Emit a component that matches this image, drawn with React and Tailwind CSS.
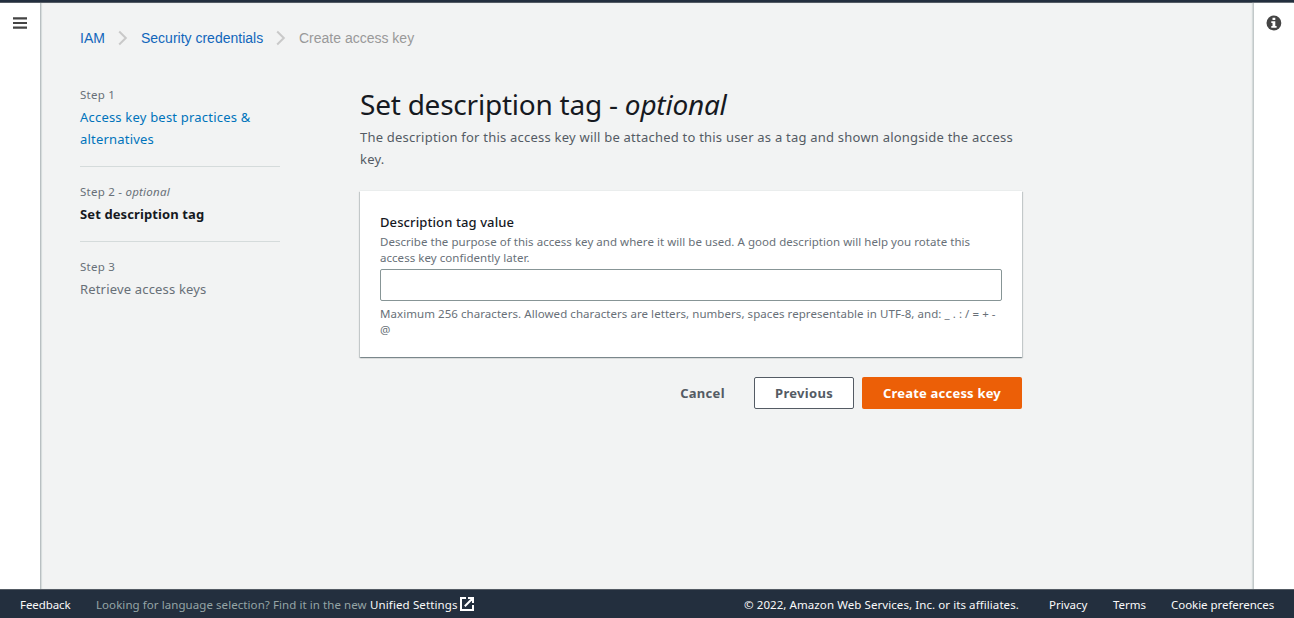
const Line = ({ className = '', children }) => (
  <span className={`block whitespace-nowrap ${className}`}>{children}</span>
);

const Chevron = () => (
  <svg width="10" height="16" viewBox="0 0 10 16" fill="none" stroke="#c9c9c9" strokeWidth="2" className="shrink-0">
    <path d="M1.2 1.5 7.8 8l-6.6 6.5" />
  </svg>
);

function Breadcrumbs() {
  return (
    <nav className="flex h-5 items-center font-['Liberation_Sans',sans-serif] text-[14px] leading-5 whitespace-nowrap text-[#1166bb]">
      <a className="w-[38px]">IAM</a>
      <Chevron />
      <a className="ml-[13px] w-[135px]">Security credentials</a>
      <Chevron />
      <span className="ml-[13px] text-[#999999]">Create access key</span>
    </nav>
  );
}

function Steps() {
  return (
    <ol className="w-[200px] shrink-0 text-[13px] text-[#687078]">
      <li className="h-[83px] border-b border-[#d5dbdb]">
        <Line className="h-[22px] text-[11.5px] leading-[21px] tracking-[0.24px]">Step 1</Line>
        <a className="block text-[#0073bb]">
          <Line className="leading-[22px] tracking-[0.2px]">Access key best practices &amp;</Line>
          <Line className="leading-[22px] tracking-[0.2px]">alternatives</Line>
        </a>
      </li>
      <li className="h-[75px] border-b border-[#d5dbdb] pt-[14px]">
        <Line className="h-[22px] text-[11.5px] leading-[21px] tracking-[0.24px]">Step 2 - <i>optional</i></Line>
        <Line className="leading-[22px] font-bold tracking-[0.11px] text-[#16191f]">Set description tag</Line>
      </li>
      <li className="pt-[14px]">
        <Line className="h-[22px] text-[11.5px] leading-[21px] tracking-[0.24px]">Step 3</Line>
        <Line className="leading-[22px] tracking-[0.17px]">Retrieve access keys</Line>
      </li>
    </ol>
  );
}

function DescriptionForm() {
  return (
    <section className="h-[166px] w-[662px] bg-white px-5 pt-5 text-[11.5px] leading-4 text-[#687078] shadow-[0_-1px_0_0_#eaeded,0_1px_1px_0_rgba(0,28,36,0.3),1px_1px_1px_0_rgba(0,28,36,0.15),-1px_1px_1px_0_rgba(0,28,36,0.15)]">
      <label className="block">
        <Line className="h-[23px] text-[13px] leading-[22px] font-medium tracking-[0.1px] text-[#16191f]">Description tag value</Line>
        <Line className="tracking-[0.04px]">Describe the purpose of this access key and where it will be used. A good description will help you rotate this</Line>
        <Line className="tracking-[0.04px]">access key confidently later.</Line>
        <input className="mt-[3px] block h-8 w-[622px] rounded-[2px] border border-[#879596] bg-white px-2 outline-none" />
      </label>
      <Line className="mt-[5px] tracking-[0.06px]">Maximum 256 characters. Allowed characters are letters, numbers, spaces representable in UTF-8, and: _ . : / = + -</Line>
      <Line>@</Line>
    </section>
  );
}

function Footer() {
  return (
    <footer className="flex h-[29px] shrink-0 items-center border-t border-[#545b64] bg-[#232f3e] px-5 pt-[1px] text-[11.5px] leading-4 whitespace-nowrap text-[#fafafa]">
      <a className="w-[76px] tracking-[-0.08px]">Feedback</a>
      <span className="w-[274px] tracking-[0.07px] text-[#95a5a6]">Looking for language selection? Find it in the new</span>
      <a className="w-[90px] tracking-[0.12px]">Unified Settings</a>
      <svg width="14" height="14" viewBox="0 0 14 14" fill="none" stroke="#fff" strokeWidth="2" className="-mt-px">
        <path d="M6 1H1v12h12V8M8 1h5v5M13 1 4.8 9.2" />
      </svg>
      <span className="ml-auto w-[305px] tracking-[0.08px]">© 2022, Amazon Web Services, Inc. or its affiliates.</span>
      <a className="w-[64px]">Privacy</a>
      <a className="w-[58px]">Terms</a>
      <a className="w-[103px] tracking-[-0.04px]">Cookie preferences</a>
    </footer>
  );
}

export default function App() {
  return (
    <div className="flex h-[618px] w-[1294px] flex-col overflow-hidden bg-white font-['Noto_Sans',sans-serif]">
      <div className="h-[3px] shrink-0 border-b border-[#545b64] bg-[#232f3e]" />
      <div className="flex min-h-0 flex-1">
        <aside className="w-10 shrink-0 pt-[14px] pl-[13px]">
          <svg width="14" height="12" viewBox="0 0 14 12" fill="#444444">
            <path d="M0 .2h14v2.2H0zM0 4.9h14v2.2H0zM0 9.6h14v2.2H0z" />
          </svg>
        </aside>
        <main className="flex-1 border-l border-[#b9c0c2] bg-[#f2f3f3] pt-[25px] pl-[39px] shadow-[inset_1px_0_1px_#d5dbdb]">
          <Breadcrumbs />
          <div className="mt-9 flex gap-20">
            <Steps />
            <div className="w-[662px]">
              <h1 className="flex h-10 items-center text-[28px] leading-9 tracking-[-0.23px] whitespace-nowrap text-[#16191f]">
                <span>Set description tag -&nbsp;</span>
                <i>optional</i>
              </h1>
              <div className="mt-[2px] mb-[21px] text-[13px] leading-[22px] tracking-[0.22px] text-[#545b64]">
                <Line>The description for this access key will be attached to this user as a tag and shown alongside the access</Line>
                <Line>key.</Line>
              </div>
              <DescriptionForm />
              <div className="mt-5 flex items-center justify-end text-[13px] leading-5 font-bold tracking-[0.3px] whitespace-nowrap text-[#545b64]">
                <button className="mr-[29px] w-[45px]">Cancel</button>
                <button className="mr-2 h-8 w-[100px] rounded-[2px] border border-[#545b64] bg-white">Previous</button>
                <button className="h-8 w-[160px] rounded-[2px] bg-[#ec5f07] tracking-[0.2px] text-white">Create access key</button>
              </div>
            </div>
          </div>
        </main>
        <aside className="w-[41px] shrink-0 border-l border-[#c3c9ca] pt-[12px] pl-[12px] shadow-[-1px_0_1px_#d5dbdb]">
          <svg width="16" height="16" viewBox="0 0 16 16">
            <circle cx="7.9" cy="8" r="7.4" fill="#444444" />
            <path d="M6.5 2.8h2.8v2.3H6.5zM5.3 6.3h4v4.8h1.3v1.6H5.3v-1.6h1.2V7.9H5.3z" fill="#fff" />
          </svg>
        </aside>
      </div>
      <Footer />
    </div>
  );
}
